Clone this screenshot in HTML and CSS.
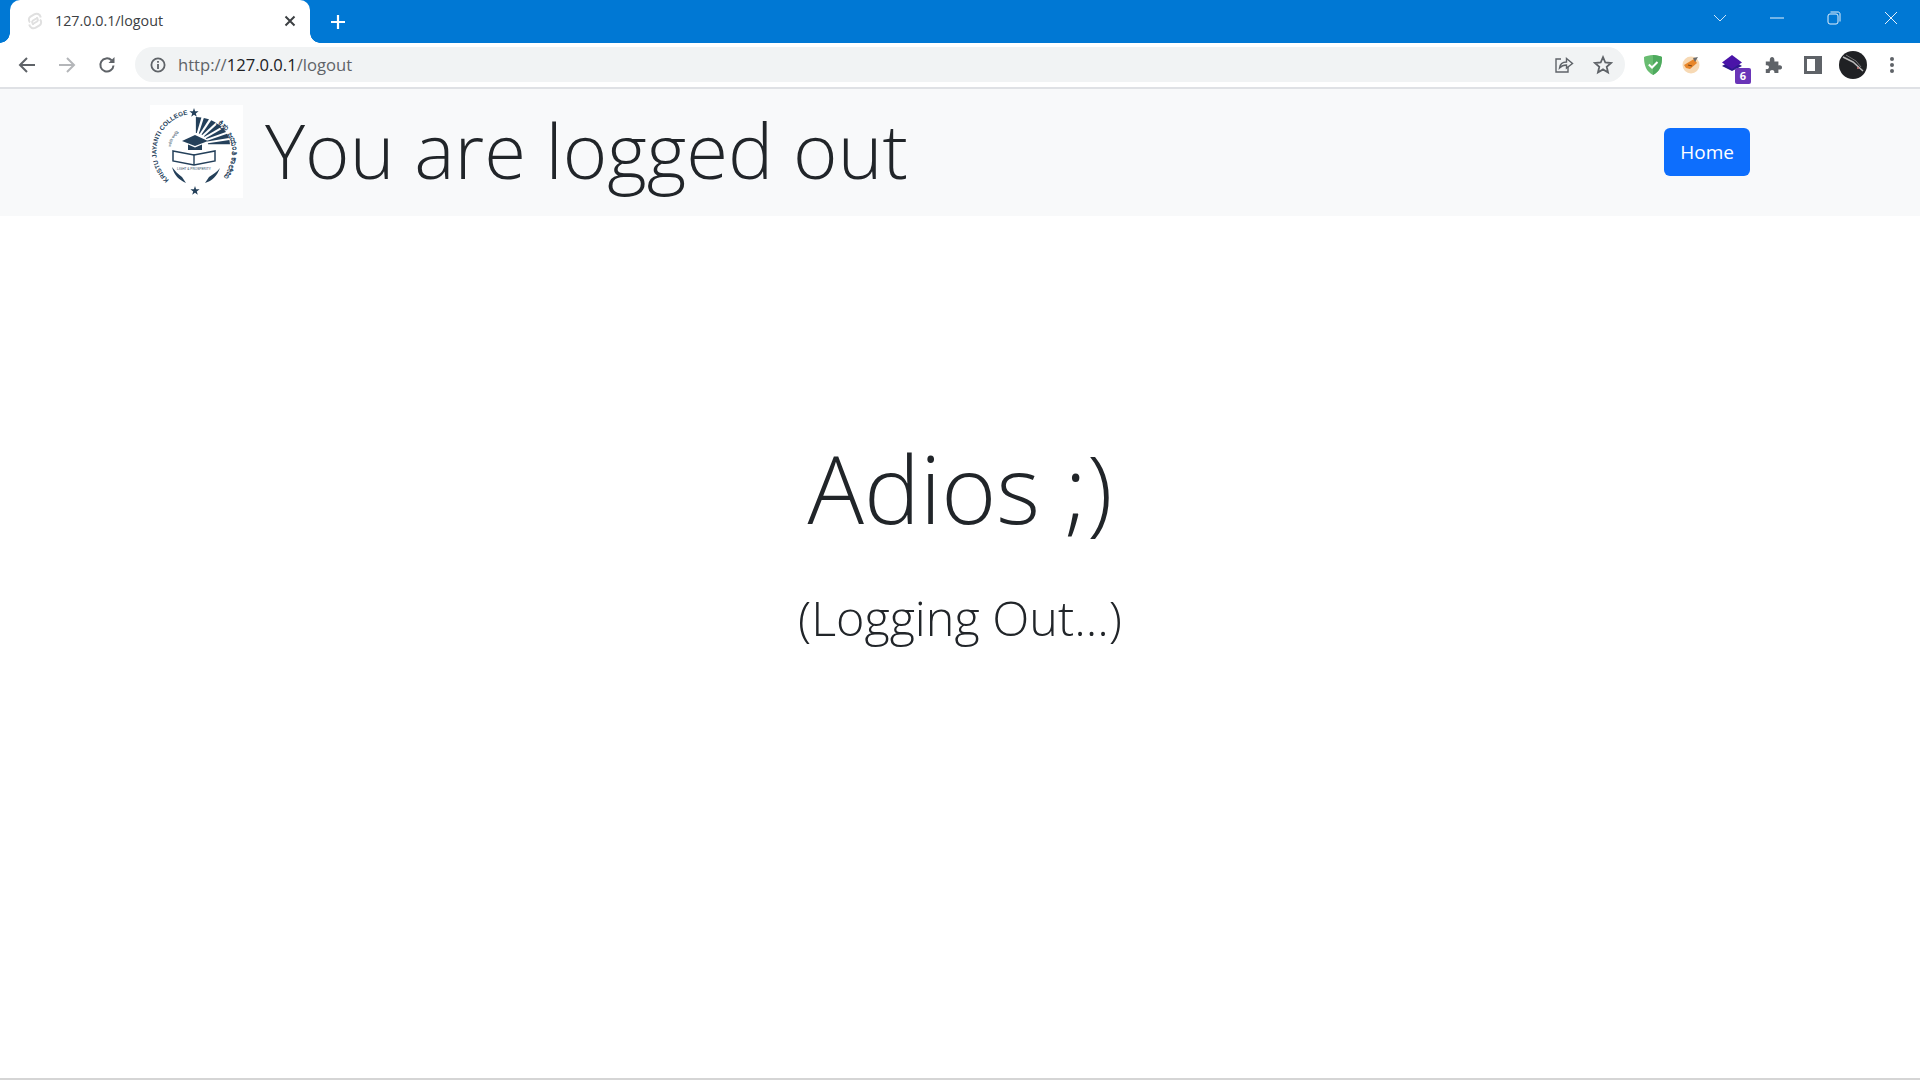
FILE: index.html
```html
<!DOCTYPE html>
<html lang="en">
<head>
    <meta charset="UTF-8">
    <title>127.0.0.1/logout</title>
    <link rel="stylesheet" href="styles.css">
</head>
<body>
    <div class="tabstrip">
        <div class="tab">
            <svg class="favicon" width="16" height="18" viewBox="0 0 16 18" fill="none" stroke="#e0e0e0" stroke-width="2">
                <path d="M13.800 5.500C13 2 9.700 .8 7.300 2.300L3.500 4.700C1.500 6 1.300 8.800 3 10.500"/>
                <path d="M2.200 12.500C3 16 6.300 17.200 8.700 15.700L12.500 13.300C14.500 12 14.700 9.200 13 7.500"/>
                <path d="M11 5.500 6 8.500C4.500 9.500 5 12 7 12M5 12.500 10 9.500C11.500 8.500 11 6 9 6"/>
            </svg>
            <span class="tab-title">127.0.0.1/logout</span>
            <svg class="tab-close" width="12" height="12" viewBox="0 0 12 12" stroke="#3c4043" stroke-width="2">
                <path d="M1.500 1.500 10.500 10.500M10.500 1.500 1.500 10.500"/>
            </svg>
        </div>
        <svg class="new-tab" width="16" height="16" viewBox="0 0 16 16" stroke="#fff" stroke-width="2.200">
            <path d="M8 1V15M1 8H15"/>
        </svg>
        <div class="window-controls">
            <svg width="14" height="8" viewBox="0 0 14 8" fill="none" stroke="#cfe4f7"><path d="M1 1 7 7 13 1"/></svg>
            <svg class="win-min" width="14" height="2" viewBox="0 0 14 2" stroke="#e6f1fb"><path d="M0 1H14"/></svg>
            <svg class="win-max" width="14" height="14" viewBox="0 0 14 14" fill="none" stroke="#e6f1fb"><rect x="1" y="3" width="10" height="10" rx="2"/><path d="M3.500 1H11C12.200 1 13 1.800 13 3V10.500"/></svg>
            <svg class="win-close" width="14" height="14" viewBox="0 0 14 14" stroke="#e6f1fb"><path d="M1 1 13 13M13 1 1 13"/></svg>
        </div>
    </div>

    <div class="toolbar">
        <svg class="nav-btn" width="18" height="18" viewBox="0 0 18 18" fill="none" stroke="#5f6368" stroke-width="2">
            <path d="M17 9H2M9 2 2 9 9 16"/>
        </svg>
        <svg class="nav-btn" width="18" height="18" viewBox="0 0 18 18" fill="none" stroke="#b4b6b9" stroke-width="2">
            <path d="M1 9H16M9 2 16 9 9 16"/>
        </svg>
        <svg class="nav-btn" width="18" height="18" viewBox="0 0 18 18" fill="none" stroke="#5f6368" stroke-width="2">
            <path d="M15.500 9.500A6.600 6.600 0 1 1 13.600 4.300"/>
            <path d="M16.500 1V7H10.500Z" fill="#5f6368" stroke="none"/>
        </svg>
        <div class="omnibox">
            <svg width="16" height="16" viewBox="0 0 16 16" fill="none" stroke="#5f6368" stroke-width="1.800">
                <circle cx="8" cy="8" r="6.600"/>
                <path d="M8 7V12M8 4V5.800"/>
            </svg>
            <span class="url"><span class="url-dim">http://</span>127.0.0.1<span class="url-dim">/logout</span></span>
            <svg class="omni-share" width="20" height="18" viewBox="0 0 20 18" fill="none" stroke="#5f6368" stroke-width="1.400">
                <path d="M7 3H2V16H14V11"/>
                <path d="M5.500 12C6 8 9 6 12.500 6V2.500L18.500 7.500 12.500 12V9C10 9 7.500 9.800 5.500 12Z"/>
            </svg>
            <svg class="omni-star" width="20" height="20" viewBox="0 0 20 20" fill="none" stroke="#5f6368" stroke-width="1.800">
                <path d="M10 2.200 12.300 7.500 18 8 13.700 11.800 15 17.400 10 14.400 5 17.400 6.300 11.800 2 8 7.700 7.500Z"/>
            </svg>
        </div>
        <div class="extensions">
            <svg width="20" height="22" viewBox="0 0 20 22">
                <path d="M10 1C6.500 1 3 2 1 3 1 11 3 17.500 10 21 17 17.500 19 11 19 3 17 2 13.500 1 10 1Z" fill="#68bc71"/>
                <path d="M10 1V21C17 17.500 19 11 19 3 17 2 13.500 1 10 1Z" fill="#4eaa5e"/>
                <path d="M5.800 10.500 9 13.500 14.500 8" fill="none" stroke="#fff" stroke-width="2"/>
            </svg>
            <svg class="ext-orange" width="20" height="20" viewBox="0 0 20 20">
                <circle cx="10" cy="10" r="8.500" fill="#f7d9b4"/>
                <path d="M3 10 13 4 16 8 9 14 5 13Z" fill="#e8862a"/>
                <path d="M12 3 17 2 14 7Z" fill="#6b6b6b"/>
                <path d="M7 10 11 11" stroke="#7a4a1a" stroke-width="1.200"/>
            </svg>
            <div class="ext-stack">
                <svg width="22" height="22" viewBox="0 0 22 22">
                    <path d="M1 12 11 17 21 12 11 6Z" fill="#2d1a8c"/>
                    <path d="M1 8.500 11 1 21 8.500 11 15Z" fill="#4a14a8"/>
                </svg>
                <span class="ext-badge">6</span>
            </div>
            <svg class="ext-puzzle" width="18" height="18" viewBox="0 0 20 20">
                <path d="M2 6H6.500C6 2.500 7.500 1 9 1S12 2.500 11.500 6H16V10.500C19.500 10 20 11.500 20 13S18.500 15.500 16 15V19H11.500C12 16.500 10.500 15.500 9 15.500S6 16.500 6.500 19H2V14.500C4.500 15 5.500 13.800 5.500 12.300S4.500 9.800 2 10.300Z" fill="#5f6368"/>
            </svg>
            <svg class="ext-panel" width="18" height="18" viewBox="0 0 18 18">
                <path d="M0 0H18V18H0ZM3 3V15H11V3Z" fill="#5f6368" fill-rule="evenodd"/>
            </svg>
            <svg class="ext-avatar" width="28" height="28" viewBox="0 0 28 28">
                <circle cx="14" cy="14" r="14" fill="#202124"/>
                <path d="M4 6 14 11 24 20" fill="none" stroke="#b9b9b9" stroke-width="1.500"/>
                <path d="M7 4 17 10 22 16" fill="none" stroke="#777" stroke-width="1"/>
                <circle cx="19" cy="17" r="1" fill="#c77"/>
            </svg>
            <svg class="ext-menu" width="6" height="18" viewBox="0 0 6 18" fill="#5f6368">
                <circle cx="3" cy="3" r="2"/><circle cx="3" cy="9" r="2"/><circle cx="3" cy="15" r="2"/>
            </svg>
        </div>
    </div>

    <nav class="navbar">
        <div class="brand">
            <div class="logo">
                <svg width="93" height="93" viewBox="0 0 93 93">
                    <defs>
                        <path id="sealLeft" d="M19 75A38 38 0 0 1 40 9"/>
                        <path id="sealRight" d="M68 18A38 38 0 0 1 71 74"/>
                        <path id="sealInner" d="M21 42A24 24 0 0 1 39 22"/>
                    </defs>
                    <text class="seal-text"><textPath href="#sealLeft">KRISTU JAYANTI COLLEGE</textPath></text>
                    <text class="seal-kannada"><textPath href="#sealRight">ಕ್ರಿಸ್ತು ಜಯಂತಿ ಕಾಲೇಜು</textPath></text>
                    <text class="seal-small"><textPath href="#sealInner">ज्योति समृद्धि</textPath></text>
                    <path d="M44 3 45.100 6.300H48.600L45.800 8.400 46.800 11.700 44 9.700 41.200 11.700 42.200 8.400 39.400 6.300H42.900Z" fill="#24405a"/>
                    <path d="M45 81 46.100 84.300H49.600L46.800 86.400 47.800 89.700 45 87.700 42.200 89.700 43.200 86.400 40.400 84.300H43.900Z" fill="#24405a"/>
                    <g fill="#24405a">
                        <path d="M45.900 12 51.400 12.500 46.800 28.100 45.900 28Z"/>
                        <path d="M53.800 12.900 59 14.300 49.700 28.800 48.800 28.500Z"/>
                        <path d="M61.200 15.200 65.800 17.500 52.300 30 51.500 29.600Z"/>
                        <path d="M67.700 18.700 71.600 21.800 54.500 31.800 53.900 31.200Z"/>
                        <path d="M73.100 23.300 76 27.100 56.300 34 55.800 33.300Z"/>
                        <path d="M77.100 28.800 78.900 33 57.400 36.500 57.100 35.700Z"/>
                        <path d="M79.400 34.900 80 39.300 58 39.200 57.900 38.300Z"/>
                        <path d="M45 30 58 36 45 41 32 36Z"/>
                        <path d="M38 39.500V45H52V39.500L45 42.500Z"/>
                        <path d="M23 46 44 50 65 46V56L44 60 23 56Z" fill="none" stroke="#24405a" stroke-width="1.500"/>
                        <path d="M43.300 49H44.700V60H43.300Z"/>
                        <path d="M22 62C24 70 29 75 36 78L32 72C28 69 25 66 22 62ZM70 63C67 71 62 76 55 78L59 72C63 69 67 67 70 63Z"/>
                    </g>
                    <text class="seal-motto" x="44" y="65" text-anchor="middle">LIGHT &amp; PROSPERITY</text>
                </svg>
            </div>
            <h1 class="brand-title">You are logged out</h1>
        </div>
        <a class="btn-home" href="#">Home</a>
    </nav>

    <main class="content">
        <h2 class="bye">Adios ;)</h2>
        <p class="status">(Logging Out...)</p>
    </main>
</body>
</html>
```

FILE: styles.css
```css
* {
    box-sizing: border-box;
}
html, body {
    margin: 0;
    height: 1080px;
    overflow: hidden;
}
body {
    display: flex;
    flex-direction: column;
    background: white;
    font-family: "Open Sans", "Noto Sans", sans-serif;
    color: #212529;
    border-bottom: 2px solid #d5d5d5;
}
svg {
    display: block;
    flex: none;
}

/* browser chrome */
.tabstrip {
    height: 43px;
    background: #0078d4;
    display: flex;
    align-items: center;
    padding-left: 10px;
}
.tab {
    width: 300px;
    height: 43px;
    background: white;
    border-radius: 10px 10px 0 0;
    display: flex;
    align-items: center;
    padding: 0 14px 2px 17px;
    position: relative;
}
.tab::before, .tab::after {
    content: "";
    position: absolute;
    bottom: 0;
    width: 10px;
    height: 10px;
    background: radial-gradient(circle at 0 0, #0078d4 9.500px, white 10px);
}
.tab::before {
    left: -10px;
}
.tab::after {
    right: -10px;
    transform: scaleX(-1);
}
.tab-title {
    margin-left: 12px;
    font-size: 14.300px;
    color: #3c4043;
    flex: 1;
}
.new-tab {
    margin-left: 20px;
}
.window-controls {
    margin-left: auto;
    display: flex;
    align-items: center;
    padding: 0 22px 7px 0;
}
.win-min, .win-max, .win-close {
    margin-left: 43px;
}

.toolbar {
    height: 46px;
    background: white;
    border-bottom: 2px solid #dfe1e5;
    display: flex;
    align-items: center;
    padding: 0 0 1px 18px;
}
.nav-btn {
    margin-right: 22px;
}
.omnibox {
    width: 1490px;
    height: 35px;
    margin-left: -3px;
    background: #f1f3f4;
    border-radius: 18px;
    display: flex;
    align-items: center;
    padding: 0 12px 0 15px;
}
.url {
    margin-left: 12px;
    font-size: 16.600px;
    color: #202124;
    flex: 1;
}
.url-dim {
    color: #5f6368;
}
.omni-share {
    margin-right: 19px;
}
.extensions {
    display: flex;
    align-items: center;
    margin-left: 18px;
}
.ext-orange {
    margin-left: 18px;
}
.ext-stack {
    margin-left: 20px;
    position: relative;
}
.ext-badge {
    position: absolute;
    right: -8px;
    bottom: -8px;
    width: 16px;
    height: 16px;
    background: #6a35b8;
    border-radius: 2px;
    color: white;
    font-size: 11px;
    font-weight: 700;
    line-height: 16px;
    text-align: center;
}
.ext-puzzle {
    margin-left: 21px;
}
.ext-panel {
    margin-left: 22px;
}
.ext-avatar {
    margin-left: 17px;
}
.ext-menu {
    margin-left: 22px;
}

/* page */
.navbar {
    height: 127px;
    background-color: #f8f9fa;
    display: flex;
    align-items: center;
    justify-content: space-between;
    padding: 0 170px 0 150px;
}
.brand {
    display: flex;
    align-items: center;
}
.logo {
    width: 93px;
    height: 93px;
    margin-bottom: 2px;
    background: white;
}
.seal-text {
    font-family: "Liberation Sans", sans-serif;
    font-size: 6.400px;
    font-weight: 700;
    fill: #24405a;
}
.seal-kannada {
    font-family: "Noto Sans", sans-serif;
    font-size: 8.200px;
    font-weight: 700;
    fill: #24405a;
}
.seal-small {
    font-family: "Noto Sans", sans-serif;
    font-size: 3.500px;
    fill: #24405a;
}
.seal-motto {
    font-family: "Liberation Sans", sans-serif;
    font-size: 3.200px;
    fill: #24405a;
}
.brand-title {
    margin: 0 0 6px 22px;
    font-size: 76px;
    font-weight: 300;
    line-height: 1.2;
}
.btn-home {
    background-color: #0d6efd;
    color: white;
    padding: 8px 16px;
    margin-bottom: 1px;
    border-radius: 6px;
    font-size: 19px;
    line-height: 32px;
    text-decoration: none;
}
.content {
    text-align: center;
    padding-top: 216px;
}
.bye {
    margin: 0;
    font-size: 94px;
    font-weight: 300;
    line-height: 1.2;
}
.status {
    margin: 43px 0 0;
    font-size: 48.500px;
    font-weight: 300;
    line-height: 1.2;
}
```
